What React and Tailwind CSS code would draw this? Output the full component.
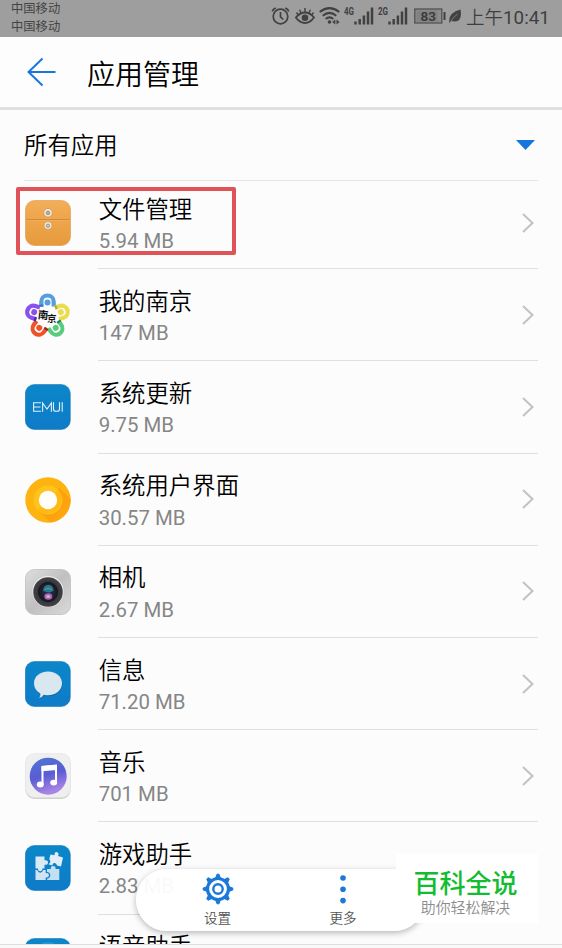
function FilesIcon() {
  return (
    <svg viewBox="0 0 46 46" className="size-[46px]">
      <defs>
        <linearGradient id="files" x1="0" y1="0" x2="0" y2="1">
          <stop offset="0" stopColor="#f3ae58" />
          <stop offset="1" stopColor="#e79a3c" />
        </linearGradient>
      </defs>
      <rect x="0.5" y="0.5" width="45" height="45" rx="9" fill="url(#files)" stroke="#d99a4b" strokeWidth="0.6" />
      <path d="M1 19.5H45" stroke="#c97f30" strokeWidth="0.9" />
      <path d="M1 20.3H45" stroke="#f6b564" strokeWidth="0.6" />
      <circle cx="23" cy="12.7" r="4.3" fill="#f3e7d6" stroke="#c18c4c" strokeWidth="0.6" />
      <circle cx="23" cy="12.9" r="1.8" fill="#b9b0a2" stroke="#8b7e6a" strokeWidth="0.7" />
      <circle cx="23" cy="25.5" r="4" fill="#f3e7d6" stroke="#c18c4c" strokeWidth="0.6" />
      <circle cx="23" cy="25.7" r="1.7" fill="#d3c4ae" stroke="#8b7e6a" strokeWidth="0.7" />
    </svg>
  );
}

const petals = [
  { angle: 0, color: '#559fdf', tip: '#3b78c9' },
  { angle: 72, color: '#eadc4c', tip: '#b9a93a' },
  { angle: 144, color: '#58cc7d', tip: '#2f7f55' },
  { angle: 216, color: '#ee5228', tip: '#8e2a20' },
  { angle: 288, color: '#8a50ea', tip: '#4a23b8' },
];

function NanjingIcon() {
  return (
    <svg viewBox="0 0 46 46" className="size-[46px]">
      {petals.map((p) => (
        <g key={p.angle} transform={`rotate(${p.angle} 22.5 24.5)`}>
          <path d="M16.3 14.500V9.700A6.200 6.200 0 0 1 28.700 9.700V14.500" fill="none" stroke={p.color} strokeWidth="4.200" />
          <path d="M16.300 12.500V14.800" fill="none" stroke={p.tip} strokeWidth="4.200" />
          <circle cx="22.500" cy="10.500" r="3" fill={p.color} />
        </g>
      ))}
      <text x="13" y="27" fontSize="10.5" fontWeight="700" fill="#111" fontFamily="'Noto Sans CJK SC', sans-serif" transform="rotate(6 19 22)">
        南
      </text>
      <text x="22" y="30" fontSize="9.5" fontWeight="700" fill="#111" fontFamily="'Noto Sans CJK SC', sans-serif">
        京
      </text>
    </svg>
  );
}

function BlueTile({ children }) {
  return (
    <svg viewBox="0 0 46 46" className="size-[46px]">
      <defs>
        <linearGradient id="blue" x1="0" y1="0" x2="0" y2="1">
          <stop offset="0" stopColor="#0a87c9" />
          <stop offset="1" stopColor="#0f7bc8" />
        </linearGradient>
      </defs>
      <rect x="0.3" y="0.5" width="45" height="45" rx="9" fill="url(#blue)" stroke="#086caf" strokeWidth="0.5" />
      {children}
    </svg>
  );
}

function EmuiIcon() {
  return (
    <BlueTile>
      <g fill="none" stroke="#e2f1fa" strokeWidth="1.1">
        <path d="M16 18.7H8.6V27.3H16M8.6 23H15.5" />
        <path d="M17.6 27.8V19L22 25L26.4 19V27.8" />
        <path d="M28.5 18.2V25Q28.5 27.3 30.8 27.3H32.2Q34.5 27.3 34.5 25V18.2" />
        <path d="M37.2 18.2V27.8" />
      </g>
    </BlueTile>
  );
}

function SystemUiIcon() {
  return (
    <svg viewBox="0 0 46 46" className="size-[46px]">
      <defs>
        <clipPath id="disc">
          <circle cx="23" cy="23" r="22.7" />
        </clipPath>
        <linearGradient id="shade" x1="0" y1="0" x2="1" y2="1">
          <stop offset="0.3" stopColor="#ff9a08" />
          <stop offset="1" stopColor="#ffae14" />
        </linearGradient>
      </defs>
      <circle cx="23" cy="23" r="22.7" fill="#fdb310" />
      <g clipPath="url(#disc)">
        <path d="M34 11L48 24V48H28L13 33Z" fill="url(#shade)" />
      </g>
      <circle cx="23" cy="23" r="14.5" fill="#ffc41c" />
      <path d="M12.8 33.2A14.5 14.5 0 0 0 33.2 12.8L29 17L17 29Z" fill="#ffb814" />
      <circle cx="23" cy="23" r="9.2" fill="#fffefa" />
    </svg>
  );
}

function CameraIcon() {
  return (
    <svg viewBox="0 0 46 46" className="size-[46px]">
      <defs>
        <linearGradient id="metal" x1="0" y1="0" x2="1" y2="1">
          <stop offset="0" stopColor="#dedede" />
          <stop offset="0.5" stopColor="#c0c0c0" />
          <stop offset="1" stopColor="#dadada" />
        </linearGradient>
        <radialGradient id="lens">
          <stop offset="0" stopColor="#30324a" />
          <stop offset="0.65" stopColor="#17191f" />
          <stop offset="0.7" stopColor="#37373c" />
          <stop offset="1" stopColor="#454347" />
        </radialGradient>
      </defs>
      <rect x="0.5" y="0.5" width="45" height="45" rx="9" fill="url(#metal)" stroke="#b9b9b9" strokeWidth="0.7" />
      <circle cx="23" cy="22.6" r="15.6" fill="#eeeeee" />
      <circle cx="23" cy="23" r="14.8" fill="url(#lens)" />
      <path d="M18 22Q18.5 15.7 23.5 15.7Q28.5 16 28.5 22L24 23.5Z" fill="#2a7789" />
      <path d="M20 20.5Q23 18 26.5 20.5" stroke="#55a4ad" strokeWidth="1" fill="none" />
      <ellipse cx="23.3" cy="27.5" rx="4" ry="3.2" fill="#a065b6" />
      <ellipse cx="23.2" cy="27.5" rx="2" ry="1.6" fill="#e6a6e2" />
    </svg>
  );
}

function MessagesIcon() {
  return (
    <BlueTile>
      <path d="M23 10.5C31.2 10.5 37 15.6 37 22.3S31.2 34.3 23 34.3Q20.7 34.3 18.7 33.8Q17.6 36.3 14.2 37.1Q15.8 35 15.3 32.4C11.4 30.4 9 26.7 9 22.3C9 15.6 14.8 10.5 23 10.5Z" fill="#086aa6" transform="translate(0.4 0.9)" />
      <path d="M23 10.5C31.2 10.5 37 15.6 37 22.3S31.2 34.3 23 34.3Q20.7 34.3 18.7 33.8Q17.6 36.3 14.2 37.1Q15.8 35 15.3 32.4C11.4 30.4 9 26.7 9 22.3C9 15.6 14.8 10.5 23 10.5Z" fill="#d9e7f1" />
    </BlueTile>
  );
}

function MusicIcon() {
  return (
    <svg viewBox="0 0 46 46" className="size-[46px]">
      <defs>
        <linearGradient id="music" x1="0" y1="0" x2="0.3" y2="1">
          <stop offset="0" stopColor="#4d78d2" />
          <stop offset="0.55" stopColor="#5a5cd3" />
          <stop offset="1" stopColor="#a884e4" />
        </linearGradient>
      </defs>
      <rect x="0.5" y="0.9" width="45" height="45" rx="9" fill="#d0d0d0" />
      <rect x="0.5" y="0.5" width="45" height="44" rx="9" fill="#efefef" stroke="#e1e1e1" strokeWidth="0.5" />
      <circle cx="23.2" cy="23.2" r="18.5" fill="url(#music)" />
      <path d="M17.5 31V13.8L31 12.7V29" fill="none" stroke="#fff" strokeWidth="2" />
      <path d="M16.5 12.9L32 11.7V17L16.5 18.2Z" fill="#fff" />
      <ellipse cx="15.3" cy="31.5" rx="3.5" ry="2.9" fill="#fff" />
      <ellipse cx="28.7" cy="29.6" rx="3.5" ry="2.9" fill="#fff" />
    </svg>
  );
}

function GameIcon() {
  return (
    <BlueTile>
      <path d="M10.5 11.5H19.5V15.2Q23 14.8 23 17.5T19.5 19.8V23.5H17.3Q17.5 26.3 15.2 26.3T13 23.5H10.5Z" fill="#d9eaf5" />
      <path d="M25.5 9.5L29.5 10.3Q29.5 6.6 32 7.2T33 11L38 12.5L36 21.5L32 20.5Q31.5 17.7 29.3 18T27.5 20.5L23.5 19.3Q26.2 17.3 25.2 15.4T24.2 14.5Z" fill="#e1eef7" />
      <path d="M10.5 25H12.2Q13.2 27.7 15.2 27.7T18.2 25H20.7V28Q24 27.6 24 30.3T20.7 32.5V35H10.5Z" fill="#cfe3f2" />
      <path d="M22 24H25.8Q25.3 21 28.2 21T30.5 24H34.3V35H22.2V33.5Q25.3 33 25.3 30.2T22 27Z" fill="#c3dff2" />
    </BlueTile>
  );
}

function VoiceIcon() {
  return (
    <BlueTile>
      <circle cx="23" cy="17" r="13" fill="#2c95d3" />
    </BlueTile>
  );
}

const apps = [
  { name: '文件管理', size: '5.94 MB', Icon: FilesIcon },
  { name: '我的南京', size: '147 MB', Icon: NanjingIcon },
  { name: '系统更新', size: '9.75 MB', Icon: EmuiIcon },
  { name: '系统用户界面', size: '30.57 MB', Icon: SystemUiIcon },
  { name: '相机', size: '2.67 MB', Icon: CameraIcon },
  { name: '信息', size: '71.20 MB', Icon: MessagesIcon },
  { name: '音乐', size: '701 MB', Icon: MusicIcon },
  { name: '游戏助手', size: '2.83 MB', Icon: GameIcon },
  { name: '语音助手', size: '', Icon: VoiceIcon },
];

function Signal({ label }) {
  return (
    <svg viewBox="0 0 31 22" className="h-[22px] w-[31px]">
      <text x="0" y="9.5" fontSize="10.5" fontWeight="700" fill="#414141" fontFamily="Roboto, sans-serif" textLength="10" lengthAdjust="spacingAndGlyphs">
        {label}
      </text>
      <path d="M11.5 19.5V16.5M15.7 19.5V14M19.9 19.5V10.5M24 19.5V6.5M28 19.5V2.5" stroke="#414141" strokeWidth="2.5" />
    </svg>
  );
}

function StatusBar() {
  return (
    <div className="flex h-[37px] shrink-0 justify-between bg-[#9e9e9e] text-[#3f3f3f]">
      <div className="pl-[11px] text-[12.3px] leading-[17.5px] text-[#444]">
        <div>中国移动</div>
        <div>中国移动</div>
      </div>
      <div className="flex pt-[5px] pr-[12px]">
        <svg viewBox="0 0 20 22" className="h-[22px] w-[20px]" fill="none" stroke="#414141" strokeWidth="1.7">
          <circle cx="9.5" cy="11.5" r="7.3" />
          <path d="M9.5 7V11.8L12.3 14.5M1.2 6.5Q2 4 4.8 3M14.2 3Q17 4 17.8 6.5" />
        </svg>
        <svg viewBox="0 0 20 22" className="ml-[4px] h-[22px] w-[20px]" fill="none" stroke="#414141" strokeWidth="1.8">
          <path d="M0.8 12.5Q5 7.5 10 7.5T19 12.5Q15 18 10 18T0.8 12.5Z" />
          <circle cx="10" cy="12.7" r="3.3" fill="#414141" stroke="none" />
          <path d="M10 3V7M4.5 4.7L6.2 8M15.5 4.7L13.8 8M1.5 7.5L3 9.7M18.5 7.5L17 9.7" strokeWidth="1.4" />
        </svg>
        <svg viewBox="0 0 22 22" className="ml-[4px] h-[22px] w-[22px]" fill="none" stroke="#414141" strokeWidth="2">
          <path d="M0.7 7Q10.5 -0.8 20.3 7M3.7 10.7Q10.5 5 17.3 10.7M6.7 14Q10.5 10.8 14.3 14" />
          <circle cx="10.5" cy="17" r="1.8" fill="#414141" stroke="none" />
          <path d="M16.3 14.5V19.5L13.2 17ZM17.5 14.5V19.5L20.6 17Z" fill="#414141" stroke="none" />
        </svg>
        <div className="ml-[3px]">
          <Signal label="4G" />
        </div>
        <div className="ml-[3px]">
          <Signal label="2G" />
        </div>
        <svg viewBox="0 0 48 22" className="ml-[5px] h-[22px] w-[48px]">
          <rect x="0.8" y="4" width="27" height="14" fill="#8c8c8c" stroke="#4d4d4d" strokeWidth="1.2" />
          <rect x="2.5" y="5.5" width="21" height="11" fill="#828282" />
          <text x="6.5" y="15.7" fontSize="13.5" fontWeight="600" fill="#3a3a3a" fontFamily="Roboto, sans-serif">
            83
          </text>
          <path d="M30.5 7V15" stroke="#414141" strokeWidth="2" />
          <path d="M46.5 4.5Q49 18.5 37.5 16L35.5 18Q33.5 8 46.5 4.5Z" fill="#414141" />
          <path d="M36.5 16.5Q39.5 12 43.5 9" stroke="#9e9e9e" strokeWidth="0.7" fill="none" />
        </svg>
        <div className="ml-[4px] w-[84px] text-[18.5px] leading-[22px] font-[350] whitespace-nowrap">
          上午<span className="font-[Roboto] text-[18.8px] font-normal">10:41</span>
        </div>
      </div>
    </div>
  );
}

function AppRow({ app, first }) {
  const { name, size, Icon } = app;
  return (
    <div className={`flex h-[92.2px] shrink-0 pl-[25px] pr-6 ${first ? '-mt-[5px]' : ''}`}>
      <div className="flex w-[73px] items-center pl-[0.4px]">
        <Icon />
      </div>
      <div className="flex flex-1 items-center justify-between border-b border-[#dedfdf] pr-[4px]">
        <div className="pt-[3px] pl-[0.7px]">
          <div className="text-[23.4px] leading-[32px] font-[350] text-black">{name}</div>
          <div className="h-[33px] pt-[1.5px] font-[Roboto] text-[20.4px] leading-[32px] text-[#868686]">{size}</div>
        </div>
        <svg viewBox="0 0 12 20" className="h-[20px] w-[12px]" fill="none" stroke="#c0c2c3" strokeWidth="2">
          <path d="M1 1L10.5 10L1 19" />
        </svg>
      </div>
    </div>
  );
}

const teeth = [0, 45, 90, 135, 180, 225, 270, 315];

function FloatingBar() {
  return (
    <div className="absolute top-[869px] left-[136px] flex h-[62px] w-[289px] rounded-full bg-white/95 text-[13.5px] leading-[18px] font-[350] text-[#555] shadow-[0_2px_6px_rgba(0,0,0,0.28)]">
      <div className="flex w-[163px] flex-col items-center pt-[4px]">
        <svg viewBox="0 0 32 32" className="size-[32px]" fill="none" stroke="#1b78d8">
          {teeth.map((t) => (
            <path key={t} d="M15 1.2L17 1.2L18.5 5.5H13.5Z" transform={`rotate(${t} 16 16)`} fill="#1b78d8" strokeWidth="1" />
          ))}
          <circle cx="16" cy="16" r="10.5" strokeWidth="3.2" />
          <circle cx="16" cy="16" r="4.7" strokeWidth="2.4" />
        </svg>
        <div className="mt-[3px]">设置</div>
      </div>
      <div className="flex w-[88px] flex-col items-center pt-[4px]">
        <svg viewBox="0 0 32 32" className="size-[32px]" fill="#1b78d8">
          <circle cx="16" cy="5" r="2.8" />
          <circle cx="16" cy="16.3" r="2.8" />
          <circle cx="16" cy="27.6" r="2.8" />
        </svg>
        <div className="mt-[3px]">更多</div>
      </div>
    </div>
  );
}

function Watermark() {
  return (
    <div className="absolute top-[854px] left-[396px] flex h-[69px] w-[142px] flex-col items-center bg-white pt-[11px] pr-[3px]">
      <div className="text-[26px] leading-[34px] font-medium text-[#12bd2f]">百科全说</div>
      <div className="text-[14.9px] leading-[15px] font-[350] text-[#8c8c8c]">助你轻松解决</div>
    </div>
  );
}

function App() {
  return (
    <div className="relative flex h-[948px] w-[562px] flex-col overflow-hidden bg-[#fcfcfc] font-['Noto_Sans_CJK_SC',sans-serif]">
      <StatusBar />
      <div className="flex h-[73px] shrink-0 items-center border-b-[3px] border-[#e0e0e0] bg-[#fdfdfd] pl-[27px]">
        <svg viewBox="0 0 30 30" className="size-[30px]" fill="none" stroke="#1678dc" strokeWidth="2">
          <path d="M15.5 1.5L1.5 15L15.5 28.5M1.5 15H28.5" />
        </svg>
        <h1 className="ml-[30px] pt-[2px] text-[28px] leading-[36px] font-[350] text-black">应用管理</h1>
      </div>
      <div className="mr-6 ml-6 flex h-[71px] shrink-0 items-center justify-between border-b border-[#e4e4e4] pr-[3px]">
        <h2 className="pb-[2px] text-[23.4px] leading-[32px] font-[350] text-black">所有应用</h2>
        <svg viewBox="0 0 19 10" className="h-[10px] w-[19px]">
          <path d="M0 0H19L9.5 10Z" fill="#1276dc" />
        </svg>
      </div>
      <div className="flex h-[763px] shrink-0 flex-col overflow-hidden">
        <div className="flex flex-col pt-[1px]">
          {apps.map((app, i) => (
            <AppRow key={app.name} app={app} first={i === 0} />
          ))}
        </div>
      </div>
      <div className="h-[4px] border-t border-[#dedede] bg-[#f8f8f8]" />
      <FloatingBar />
      <Watermark />
      <div className="absolute top-[187px] left-[16px] h-[68px] w-[220px] rounded-[2px] border-4 border-[#df5257]" />
    </div>
  );
}

export default App;
